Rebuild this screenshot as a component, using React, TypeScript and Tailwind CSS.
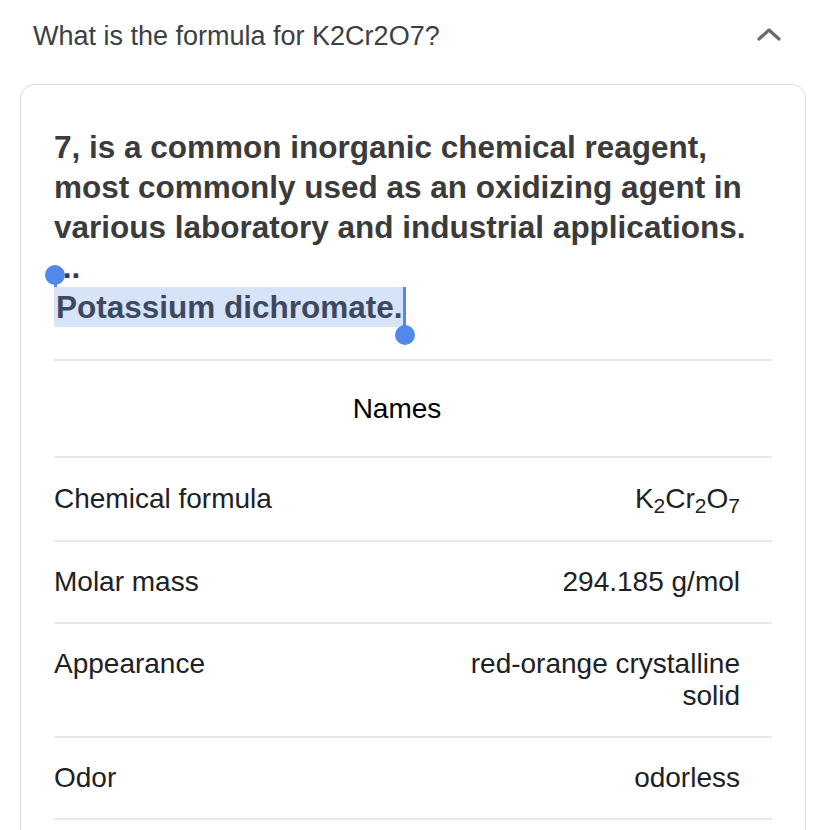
import React from "react";

const rows: { label: string; value: React.ReactNode; py: string }[] = [
  {
    label: "Chemical formula",
    py: "py-[25px]",
    value: (
      <span>
        K<sub>2</sub>Cr<sub>2</sub>O<sub>7</sub>
      </span>
    ),
  },
  { label: "Molar mass", py: "py-[24px]", value: "294.185 g/mol" },
  { label: "Appearance", py: "py-[24px]", value: "red-orange crystalline solid" },
  { label: "Odor", py: "py-[24px]", value: "odorless" },
];

export default function App() {
  return (
    <div
      className="w-[826px] h-[830px] overflow-hidden bg-white"
      style={{ fontFamily: '"Liberation Sans", Arial, sans-serif' }}
    >
      {/* Question header */}
      <div className="flex items-center justify-between h-[72px] pl-[33px] pr-[44px]">
        <span className="text-[27px] text-[#3c4043]">What is the formula for K2Cr2O7?</span>
        <svg width="26" height="16" viewBox="0 0 26 16" className="mt-[-4px]">
          <polyline
            points="3,13 13,4 23,13"
            fill="none"
            stroke="#6a6a6a"
            strokeWidth="3.2"
            strokeLinecap="round"
            strokeLinejoin="round"
          />
        </svg>
      </div>

      {/* Answer card */}
      <div className="mx-[20px] mt-[12px] h-[900px] rounded-[14px] border border-[#dadce0] px-[33px] pt-[42px]">
        <div className="text-[31.5px] leading-[40px] font-bold text-[#3b3b3b]">
          <p>
            7, is a common inorganic chemical reagent, most commonly used as an oxidizing agent in
            various laboratory and industrial applications.
          </p>
          <p className="relative">
            <span>...</span>
            {/* selection start handle */}
            <span className="absolute left-[-9px] top-[18px] w-[20px] h-[20px] rounded-full bg-[#5088ec]" />
            <span className="absolute left-0 top-[28px] w-[3px] h-[50px] bg-[#5088ec]" />
          </p>
          <p>
            <span className="relative inline-block bg-[#d7e4f8] text-[#3c4961] pl-[2px] pr-[3px]">
              Potassium dichromate.
              {/* selection end handle */}
              <span className="absolute right-0 top-0 w-[3px] h-full bg-[#5088ec]" />
              <span className="absolute right-[-9px] top-[38px] w-[20px] h-[20px] rounded-full bg-[#5088ec]" />
            </span>
          </p>
        </div>

        {/* Names table */}
        <div className="mt-[32px] text-[28px] leading-[32px] text-[#202124]">
          <div className="border-t-2 border-[#e8e8e8] pr-[32px] pt-[32px] pb-[31px] text-center text-black">
            Names
          </div>
          {rows.map((r) => (
            <div
              key={r.label}
              className={`flex justify-between border-t-2 border-[#e8e8e8] ${r.py}`}
            >
              <span>{r.label}</span>
              <span className="w-[330px] pr-[32px] text-right">{r.value}</span>
            </div>
          ))}
          <div className="border-t-2 border-[#e8e8e8]" />
        </div>
      </div>
    </div>
  );
}
